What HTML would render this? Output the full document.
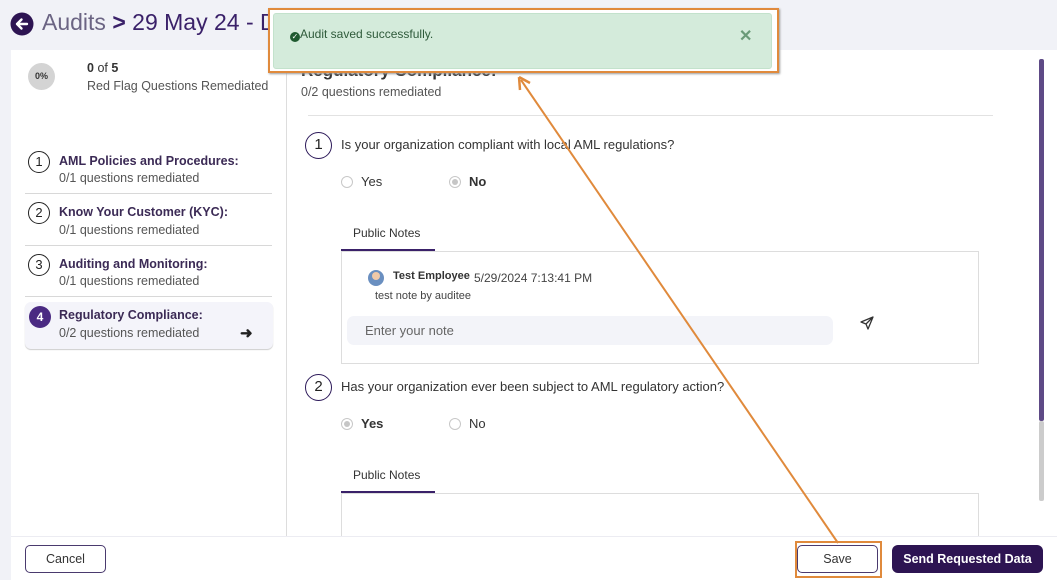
<!DOCTYPE html>
<html><head><style>
*{box-sizing:border-box;margin:0;padding:0}
body{width:1057px;height:580px;overflow:hidden;background:#f1f2f7;font-family:"Liberation Sans",sans-serif;position:relative;color:#333}
.a{position:absolute}
.t{font-size:12.5px;color:#555}
.b{font-size:12.5px;color:#3b2a55;font-weight:bold}
.num{position:absolute;width:22px;height:22px;border:1.5px solid #222;border-radius:50%;font-size:13px;text-align:center;line-height:19px;color:#222}
.qn{width:27px;height:27px;border-color:#2d1a5a;line-height:24px;font-size:15px}
.sep{position:absolute;left:25px;width:247px;height:1px;background:#d8d8d8}
.radio{position:absolute;width:12px;height:12px;border:1px solid #c8c8c8;border-radius:50%;background:#fff}
.radio.on::after{content:"";position:absolute;left:2px;top:2px;width:6px;height:6px;border-radius:50%;background:#c6c6c6}
</style></head><body>
<svg class="a" style="left:10px;top:12px" width="24" height="24" viewBox="0 0 24 24"><circle cx="12" cy="12" r="11.5" fill="#2d1452"/><path d="M17 12H7M11.5 7.5L7 12l4.5 4.5" stroke="#fff" stroke-width="2.4" fill="none" stroke-linecap="round" stroke-linejoin="round"/></svg>
<div class="a" style="left:42px;top:9px;font-size:23px;color:#6b6483">Audits <span style="color:#3a2169;font-weight:bold">&gt;</span> <span style="color:#3a2169">29 May 24 - D</span></div>
<div class="a" style="left:11px;top:50px;width:1046px;height:486px;background:#fff"></div>
<div class="a" style="left:286px;top:50px;width:1px;height:486px;background:#ddd"></div>
<div class="a" style="left:28px;top:63px;width:27px;height:27px;border-radius:50%;background:#d4d4d4;font-size:9px;font-weight:bold;text-align:center;line-height:27px;color:#333">0%</div>
<div class="a b" style="left:87px;top:61px;color:#333"><b>0</b> <span style="font-weight:normal">of</span> 5</div>
<div class="a t" style="left:87px;top:79px">Red Flag Questions Remediated</div>
<div class="num" style="left:28px;top:151px">1</div>
<div class="a b" style="left:59px;top:154px">AML Policies and Procedures:</div>
<div class="a t" style="left:59px;top:171px">0/1 questions remediated</div>
<div class="sep" style="top:193px"></div>
<div class="num" style="left:28px;top:202px">2</div>
<div class="a b" style="left:59px;top:205px">Know Your Customer (KYC):</div>
<div class="a t" style="left:59px;top:223px">0/1 questions remediated</div>
<div class="sep" style="top:245px"></div>
<div class="num" style="left:28px;top:254px">3</div>
<div class="a b" style="left:59px;top:257px">Auditing and Monitoring:</div>
<div class="a t" style="left:59px;top:274px">0/1 questions remediated</div>
<div class="sep" style="top:296px"></div>
<div class="a" style="left:25px;top:302px;width:248px;height:47px;background:#f4f4fa;border-radius:6px;box-shadow:0 1px 1px #ccc"></div>
<div class="a" style="left:29px;top:306px;width:22px;height:22px;border-radius:50%;background:#4a2a82;color:#fff;font-size:12px;font-weight:bold;text-align:center;line-height:22px">4</div>
<div class="a b" style="left:59px;top:308px">Regulatory Compliance:</div>
<div class="a t" style="left:59px;top:326px">0/2 questions remediated</div>
<div class="a" style="left:240px;top:324px;font-size:15px;font-weight:bold;color:#222">&#10140;</div>
<div class="a" style="left:301px;top:61px;font-size:17px;font-weight:bold;color:#333">Regulatory Compliance:</div>
<div class="a t" style="left:301px;top:85px">0/2 questions remediated</div>
<div class="a" style="left:308px;top:115px;width:685px;height:1px;background:#e2e2e2"></div>
<div class="num qn" style="left:305px;top:132px">1</div>
<div class="a" style="left:341px;top:137px;font-size:13px;color:#333">Is your organization compliant with local AML regulations?</div>
<div class="radio" style="left:341px;top:176px"></div><div class="a" style="left:361px;top:174px;font-size:13px">Yes</div>
<div class="radio on" style="left:449px;top:176px"></div><div class="a" style="left:469px;top:174px;font-size:13px;font-weight:bold">No</div>
<div class="a" style="left:353px;top:226px;font-size:12px;color:#333">Public Notes</div>
<div class="a" style="left:341px;top:249px;width:94px;height:2px;background:#3a2169"></div>
<div class="a" style="left:341px;top:251px;width:638px;height:113px;border:1px solid #ddd"></div>
<div class="a" style="left:368px;top:270px;width:16px;height:16px;border-radius:50%;background:#6a8fc0;overflow:hidden"><div style="margin:2px auto;width:8px;height:8px;border-radius:50%;background:#f0c9a8"></div></div>
<div class="a" style="left:393px;top:270px;font-size:11px;font-weight:bold;color:#333">Test Employee</div>
<div class="a" style="left:474px;top:271px;font-size:12px;color:#444">5/29/2024 7:13:41 PM</div>
<div class="a" style="left:375px;top:290px;font-size:11px;color:#444">test note by auditee</div>
<div class="a" style="left:347px;top:316px;width:486px;height:29px;background:#f3f4f9;border-radius:7px;font-size:13px;color:#666;padding:7px 18px">Enter your note</div>
<svg class="a" style="left:860px;top:316px" width="14" height="14" viewBox="0 0 14 14"><path d="M13 1L1 6l5 2 2 5z M6 8l7-7" stroke="#333" stroke-width="1.3" fill="none" stroke-linejoin="round"/></svg>
<div class="num qn" style="left:305px;top:374px">2</div>
<div class="a" style="left:341px;top:379px;font-size:13px;color:#333">Has your organization ever been subject to AML regulatory action?</div>
<div class="radio on" style="left:341px;top:418px"></div><div class="a" style="left:361px;top:416px;font-size:13px;font-weight:bold">Yes</div>
<div class="radio" style="left:449px;top:418px"></div><div class="a" style="left:469px;top:416px;font-size:13px">No</div>
<div class="a" style="left:353px;top:468px;font-size:12px;color:#333">Public Notes</div>
<div class="a" style="left:341px;top:491px;width:94px;height:2px;background:#3a2169"></div>
<div class="a" style="left:341px;top:493px;width:638px;height:43px;border:1px solid #ddd;border-bottom:none"></div>
<div class="a" style="left:1039px;top:59px;width:5px;height:362px;background:#5e4a86;border-radius:2px"></div>
<div class="a" style="left:1039px;top:421px;width:5px;height:80px;background:#ccc;border-radius:2px"></div>
<div class="a" style="left:11px;top:536px;width:1046px;height:44px;background:#fff;border-top:1px solid #ececf2"></div>
<div class="a" style="left:25px;top:545px;width:81px;height:28px;border:1px solid #4a3a6e;border-radius:5px;font-size:12.5px;text-align:center;line-height:26px;color:#333">Cancel</div>
<div class="a" style="left:797px;top:545px;width:81px;height:28px;border:1px solid #4a3a6e;border-radius:5px;font-size:12.5px;text-align:center;line-height:26px;color:#333">Save</div>
<div class="a" style="left:795px;top:541px;width:87px;height:37px;border:2px solid #e08a3c"></div>
<div class="a" style="left:892px;top:545px;width:151px;height:28px;background:#2d1452;border-radius:6px;font-size:12.5px;font-weight:bold;text-align:center;line-height:28px;color:#fff">Send Requested Data</div>
<div class="a" style="left:268px;top:8px;width:511px;height:65px;border:2px solid #e08a3c;background:#fff;box-shadow:1px 1px 2px #999"></div>
<div class="a" style="left:273px;top:13px;width:499px;height:56px;background:#d4ebdb;border:1px solid #c3e2cc;border-radius:3px"></div>
<div class="a" style="left:290px;top:27px;font-size:12px;color:#2e5a3a;line-height:14px"><span style="display:inline-block;width:10px;height:10px;border-radius:50%;background:#1f5a30;color:#fff;font-size:8px;line-height:10px;text-align:center;vertical-align:-1px">✓</span>Audit saved successfully.</div>
<div class="a" style="left:739px;top:26px;font-size:16px;font-weight:bold;color:#6a9a78">✕</div>
<svg class="a" style="left:0;top:0" width="1057" height="580"><line x1="838" y1="543" x2="521" y2="80" stroke="#e08a3c" stroke-width="2"/><path d="M519 77l1 13 M519 77l11 6" stroke="#e08a3c" stroke-width="2.5" fill="none"/></svg>
</body></html>
